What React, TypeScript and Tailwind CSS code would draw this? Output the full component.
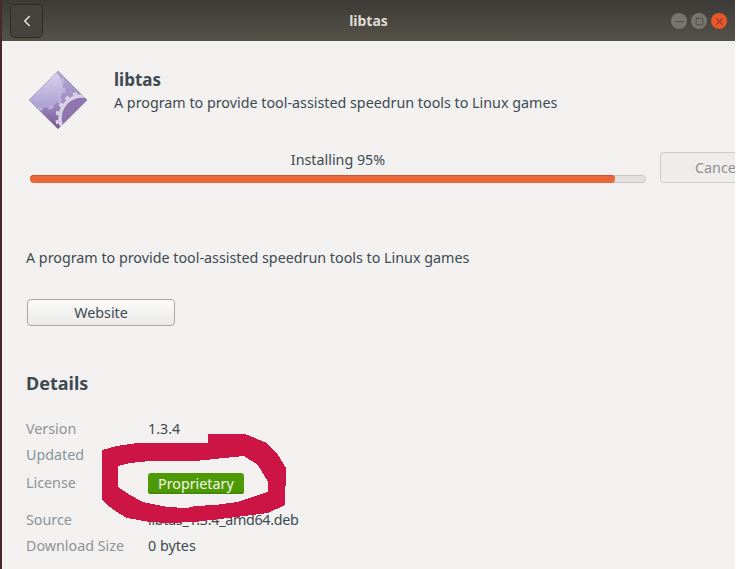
import { ChevronLeft, Minus, Square, X } from "lucide-react"

const rows = [
  { label: "Version", value: "1.3.4", cls: "h-[26px]" },
  { label: "Updated", value: "", cls: "h-[26px]" },
  { label: "License", value: "badge", cls: "h-[30px]" },
  { label: "Source", value: "libtas_1.3.4_amd64.deb", cls: "h-[26px] mt-[9px] tracking-[-0.3px]" },
  { label: "Download Size", value: "0 bytes", cls: "h-[26px]" },
]

function AppIcon() {
  return (
    <svg width="60" height="60" viewBox="0 0 60 60" className="shrink-0">
      <defs>
        <linearGradient id="dia" x1="0" y1="0" x2="0" y2="1">
          <stop offset="0" stopColor="#b1a6d6" />
          <stop offset="0.55" stopColor="#a08cc0" />
          <stop offset="1" stopColor="#75578f" />
        </linearGradient>
        <linearGradient id="lite" x1="0" y1="0" x2="0" y2="1">
          <stop offset="0" stopColor="#dcd9f2" />
          <stop offset="1" stopColor="#aba0d0" />
        </linearGradient>
        <clipPath id="diamond">
          <path d="M30 1 L59 30 L30 59 L1 30 Z" />
        </clipPath>
      </defs>
      <path d="M30 1 L59 30 L30 59 L1 30 Z" fill="url(#dia)" stroke="#a89bb8" strokeWidth="1" strokeLinejoin="round" />
      <g clipPath="url(#diamond)">
        <circle cx="15" cy="18" r="20" fill="url(#lite)" />
        <circle cx="15" cy="18" r="21" fill="none" stroke="#bcb3de" strokeWidth="3" strokeDasharray="5 6" />
        <circle cx="54" cy="48" r="21" fill="#8f76ae" />
        <circle cx="54" cy="48" r="22" fill="none" stroke="#d9d2e6" strokeWidth="3.5" />
        <circle cx="54" cy="48" r="25" fill="none" stroke="#d9d2e6" strokeWidth="3" strokeDasharray="4 5" />
      </g>
    </svg>
  )
}

export default function App() {
  return (
    <div className="relative flex h-[569px] w-[739px] overflow-hidden bg-white font-['Noto_Sans',sans-serif] text-[14.3px] text-[#3d4a52]">
      {/* desktop behind the window */}
      <div className="w-[2px] shrink-0 bg-[#45292f]" />
      <div className="flex w-[733px] shrink-0 flex-col overflow-hidden bg-[#f2f1f0]">
        {/* Header */}
        <div className="relative flex h-[41px] shrink-0 items-center justify-center bg-gradient-to-b from-[#3c3b37] to-[#56524a]">
          <div className="absolute left-[8px] top-[4px] flex h-[34px] w-[33px] items-center justify-center rounded-[5px] border border-[#2d2c29] bg-[#45433e]">
            <ChevronLeft size={18} strokeWidth={2} className="text-[#ebe9e4]" />
          </div>
          <span className="text-[14px] font-bold text-[#dfdbd2]">libtas</span>
          <div className="absolute right-[8px] top-[13px] flex gap-[4px]">
            <div className="flex h-4 w-4 items-center justify-center rounded-full bg-[#777570]">
              <Minus size={11} strokeWidth={1.5} className="text-[#33322f]" />
            </div>
            <div className="flex h-4 w-4 items-center justify-center rounded-full bg-[#777570]">
              <Square size={9} strokeWidth={1.5} className="text-[#33322f]" />
            </div>
            <div className="flex h-4 w-4 items-center justify-center rounded-full bg-[#e9562a]">
              <X size={11} strokeWidth={2} className="text-[#4a2413]" />
            </div>
          </div>
        </div>

        {/* Body */}
        <div className="flex min-h-0 flex-1 flex-col overflow-hidden pl-[24px]">
          <div className="flex pl-[2px] pt-[29px]">
            <AppIcon />
            <div className="ml-[26px]">
              <div className="text-[17px] font-bold leading-[20px]">libtas</div>
              <div className="mt-[3px] leading-[20px]">A program to provide tool-assisted speedrun tools to Linux games</div>
            </div>
          </div>

          <div className="mt-[20px] flex items-end pl-[4px]">
            <div className="w-[616px] shrink-0">
              <div className="text-center leading-[20px]">Installing 95%</div>
              <div className="mt-[5px] h-[8px] rounded-full border border-[#c8c6c3] bg-[#e2e1df]">
                <div className="-m-px h-[8px] w-[585px] rounded-full bg-[#e9683a] shadow-[inset_0_1px_0_#cf5426]" />
              </div>
            </div>
            <div className="ml-[14px] flex h-[31px] w-[100px] shrink-0 items-center rounded-[4px] border border-[#cfcdca] bg-[#eeedec] pl-[34px] text-[#8f8f8c]">
              Cancel
            </div>
          </div>

          <div className="mt-[65px] leading-[20px]">A program to provide tool-assisted speedrun tools to Linux games</div>

          <div className="ml-[1px] mt-[31px] flex h-[27px] w-[148px] items-center justify-center rounded-[4px] border border-[#aaa8a5] bg-gradient-to-b from-[#fbfbfa] to-[#ebeae9]">
            Website
          </div>

          <div className="mt-[45px] text-[18px] font-bold leading-[24px]">Details</div>

          <div className="mt-[21px] flex flex-col">
            {rows.map((row) => (
              <div key={row.label} className={`flex items-center ${row.cls}`}>
                <span className="w-[122px] shrink-0 tracking-normal text-[#8b9499]">{row.label}</span>
                {row.value === "badge" ? (
                  <span className="rounded-[3px] bg-[#4e9a06] px-[10px] leading-[21px] text-[#f2f7e6] shadow-[inset_0_-2px_0_#458a05]">
                    Proprietary
                  </span>
                ) : (
                  <span>{row.value}</span>
                )}
              </div>
            ))}
          </div>
        </div>
      </div>

      {/* hand-drawn marker scribble over the license row */}
      <svg width="739" height="569" viewBox="0 0 739 569" className="pointer-events-none absolute left-0 top-0" shapeRendering="crispEdges">
        <path
          fillRule="evenodd"
          fill="#cd1545"
          d="M102 450 L117 446 L137 443 L208 443 L208 434 L245 434 L267 443 L278 455 L286 468 L285 505 L268 513 L228 518 L195 522 L167 523 L150 522 L127 518 L117 512 L107 505 L102 500 Z M118 466 L118 487 L130 495 L143 502 L167 507 L187 508 L195 506 L215 505 L238 502 L258 495 L268 492 L268 482 L258 465 L244 456 L195 461 L150 461 L130 463 Z"
        />
      </svg>
    </div>
  )
}
